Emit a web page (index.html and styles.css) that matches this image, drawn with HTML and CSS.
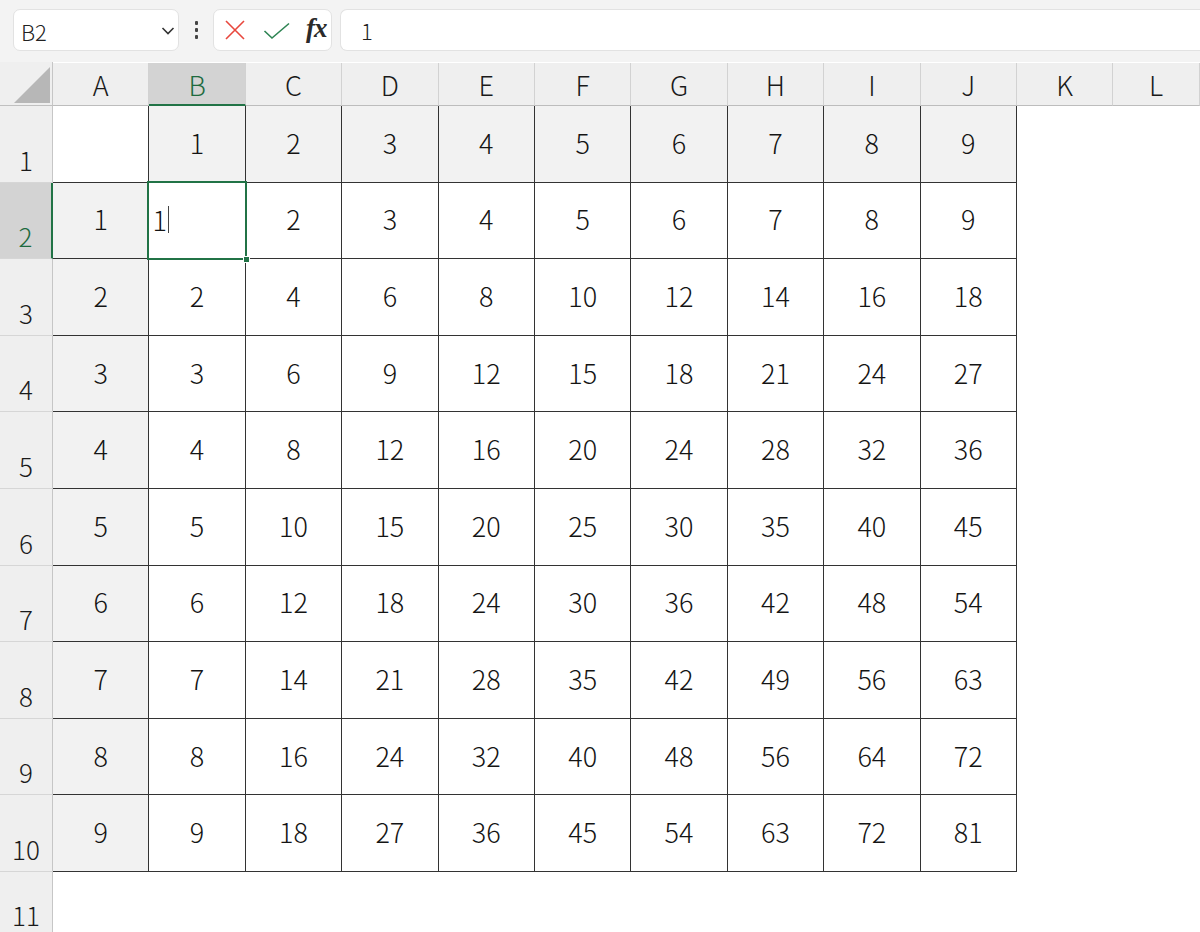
FILE: index.html
```html
<!DOCTYPE html>
<html lang="ja">
<head>
<meta charset="utf-8">
<title>Sheet</title>
<link rel="stylesheet" href="styles.css">
</head>
<body>
<div class="toolbar">
  <div class="namebox">
    <span class="namebox-text">B2</span>
    <svg class="chevron" width="14" height="10" viewBox="0 0 14 10"><path d="M1.5 2 L7 7.5 L12.5 2" fill="none" stroke="#333" stroke-width="1.6"/></svg>
  </div>
  <div class="dots"><span></span><span></span><span></span></div>
  <div class="fbtns">
    <svg class="ic-x" width="22" height="22" viewBox="0 0 22 22"><path d="M2 2 L20 20 M20 2 L2 20" stroke="#e8473d" stroke-width="1.6" fill="none"/></svg>
    <svg class="ic-check" width="28" height="18" viewBox="0 0 28 18"><path d="M1.5 9 L9 16 L26 1.5" stroke="#2e8453" stroke-width="1.6" fill="none"/></svg>
    <span class="fx">fx</span>
  </div>
  <div class="finput"><span class="finput-text">1</span></div>
</div>
<div class="sheet" id="sheet"></div>
<script src="app.js"></script>
</body>
</html>
```
FILE: app.js
```js
(function () {
  var sheet = document.getElementById('sheet');
  var cols = ['A','B','C','D','E','F','G','H','I','J','K','L'];
  function el(cls, text) {
    var d = document.createElement('div');
    d.className = cls;
    if (text !== undefined && text !== '') {
      var s = document.createElement('span');
      s.className = 'txt';
      s.textContent = text;
      d.appendChild(s);
    }
    sheet.appendChild(d);
    return d;
  }
  var corner = el('corner');
  corner.innerHTML = '<svg width="53" height="44" viewBox="0 0 53 44"><polygon points="14,41 50,5 50,41" fill="#b7b7b7"/></svg>';
  cols.forEach(function (c) {
    el('colhead' + (c === 'B' ? ' sel' : ''), c);
  });
  for (var r = 1; r <= 11; r++) {
    el('rowhead' + (r === 2 ? ' sel' : ''), String(r));
    for (var ci = 0; ci < cols.length; ci++) {
      var inTable = r <= 10 && ci <= 9;
      if (!inTable) { el('cell empty'); continue; }
      var val = '';
      var cls = 'cell tbl';
      if (r === 1 && ci === 0) { val = ''; }
      else if (r === 1) { val = String(ci); cls += ' shade'; }
      else if (ci === 0) { val = String(r - 1); cls += ' shade'; }
      else { val = String((r - 1) * ci); }
      if (r === 2 && ci === 1) {
        var d = el('cell tbl active');
        d.innerHTML = '<span class="txt left">1</span><span class="caret"></span><span class="selbox"></span><span class="handle"></span>';
        continue;
      }
      el(cls, val);
    }
  }
})();
```
FILE: styles.css
```css
html, body {
  margin: 0;
  padding: 0;
  background: #ffffff;
  overflow: hidden;
  width: 1200px;
  height: 932px;
}
body {
  font-family: "Noto Sans CJK JP", "Noto Sans", sans-serif;
  color: #1f1f1f;
}
.toolbar {
  height: 62px;
  background: #f3f3f3;
  display: flex;
  align-items: flex-start;
  padding-top: 9px;
  box-sizing: border-box;
}
.namebox {
  margin-left: 13px;
  width: 166px;
  height: 42px;
  box-sizing: border-box;
  background: #fff;
  border: 1px solid #e2e2e2;
  border-radius: 7px;
  display: flex;
  align-items: center;
  justify-content: space-between;
  padding: 0 3px 0 7px;
}
.namebox-text {
  font-size: 22px;
  font-weight: 300;
  color: #222;
  line-height: 1;
  margin-top: 1px;
}
.chevron { margin-top: 1px; }
.dots {
  width: 34px;
  height: 42px;
  display: flex;
  flex-direction: column;
  align-items: center;
  justify-content: center;
  gap: 3px;
}
.dots span {
  width: 3px;
  height: 4px;
  background: #444;
  border-radius: 1px;
}
.fbtns {
  width: 119px;
  height: 42px;
  box-sizing: border-box;
  background: #fff;
  border: 1px solid #e2e2e2;
  border-radius: 7px;
  display: flex;
  align-items: center;
  padding-left: 10px;
}
.ic-x { margin-right: 17px; }
.ic-check { margin-right: 15px; margin-top: 2px; }
.fx {
  font-family: "Liberation Serif", "DejaVu Serif", serif;
  font-style: italic;
  font-weight: bold;
  font-size: 27px;
  color: #2a2a2a;
  letter-spacing: -1px;
  line-height: 1;
  margin-top: -4px;
}
.finput {
  margin-left: 8px;
  flex: 1;
  height: 42px;
  box-sizing: border-box;
  background: #fff;
  border: 1px solid #e2e2e2;
  border-right: none;
  border-radius: 7px 0 0 7px;
  display: flex;
  align-items: center;
  padding-left: 20px;
}
.finput-text {
  font-size: 22px;
  font-weight: 300;
  color: #222;
  line-height: 1;
}
.sheet {
  display: grid;
  grid-template-columns: 53px repeat(10, 96.4px) 96.4px 1fr;
  grid-template-rows: 44px repeat(10, 76.6px) 66px;
}
.corner {
  background: #efefef;
  border-right: 1px solid #c6c6c6;
  border-bottom: 1px solid #c0c0c0;
  box-sizing: border-box;
  overflow: hidden;
}
.corner svg { display: block; }
.colhead {
  background: #efefef;
  border-right: 1px solid #d2d2d2;
  border-bottom: 1px solid #bdbdbd;
  box-sizing: border-box;
  display: flex;
  align-items: center;
  justify-content: center;
  font-size: 27px;
  font-weight: 300;
  color: #1a1a1a;
  margin-top: 1px;
}
.colhead .txt { line-height: 1; margin-top: 1px; }
.colhead.sel {
  background: #d3d3d3;
  color: #1e6b3f;
  border-bottom: 2px solid #217346;
}
.rowhead {
  background: #efefef;
  border-right: 1px solid #c6c6c6;
  border-bottom: 1px solid #d6d6d6;
  box-sizing: border-box;
  display: flex;
  align-items: flex-end;
  justify-content: center;
  padding-bottom: 9px;
  font-size: 26px;
  font-weight: 300;
  color: #1a1a1a;
}
.rowhead .txt { line-height: 1; }
.rowhead.sel {
  background: #d3d3d3;
  color: #1e6b3f;
  border-right: 2px solid #217346;
}
.cell {
  box-sizing: border-box;
  display: flex;
  align-items: center;
  justify-content: center;
  font-size: 27px;
  font-weight: 300;
  color: #141414;
  position: relative;
}
.cell .txt { line-height: 1; margin-bottom: 3px; }
.cell.tbl {
  border-right: 1px solid #333;
  border-bottom: 1px solid #333;
  background: #fff;
}
.cell.tbl.shade { background: #f2f2f2; }
.cell.active {
  justify-content: flex-start;
  padding-left: 3px;
  z-index: 2;
}
.cell.active .txt { margin-bottom: 1px; }
.caret {
  width: 1px;
  height: 27px;
  background: #444;
  margin-left: 1px;
  margin-bottom: 1px;
}
.selbox {
  position: absolute;
  left: -2px;
  top: -2px;
  right: -2px;
  bottom: -2px;
  border: 2px solid #217346;
  pointer-events: none;
}
.handle {
  position: absolute;
  right: -5px;
  bottom: -5px;
  width: 5px;
  height: 5px;
  background: #217346;
  border: 1px solid #fff;
}
```
